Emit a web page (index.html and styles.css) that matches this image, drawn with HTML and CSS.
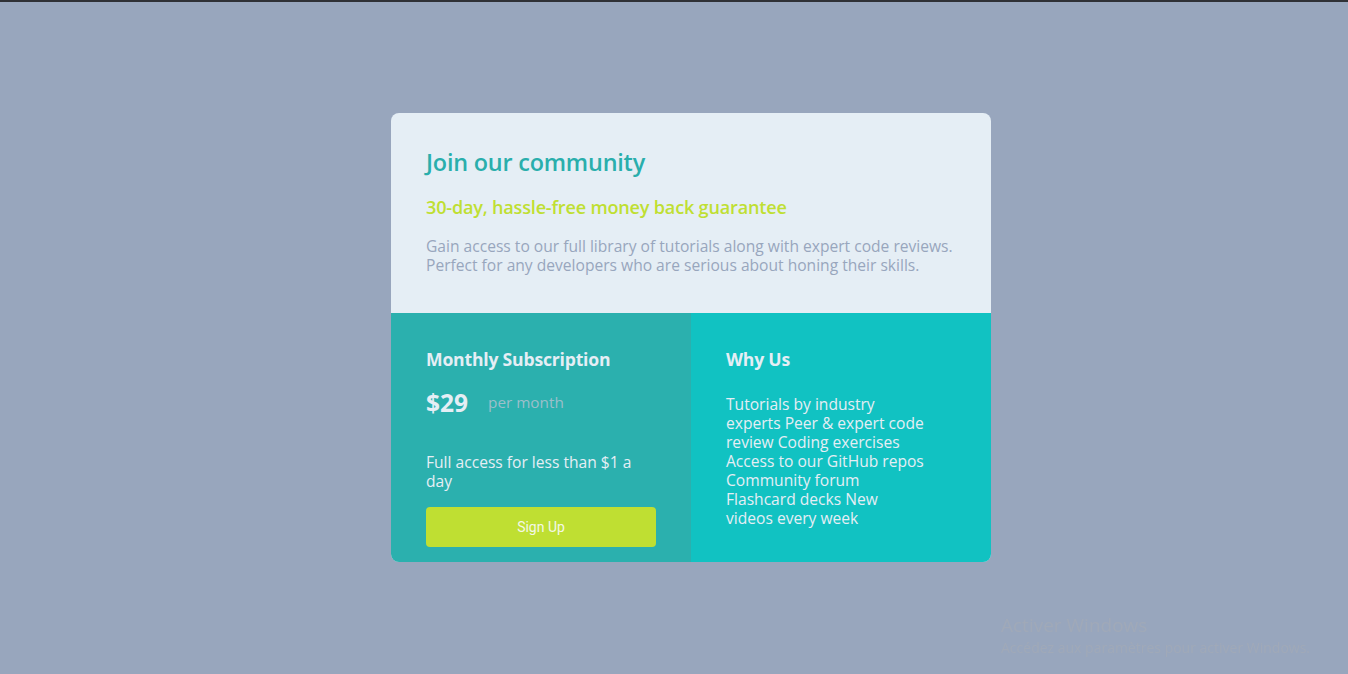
FILE: index.html
```html
<!DOCTYPE html>
<html lang="en">
<head>
<meta charset="utf-8">
<title>Single price grid</title>
<link rel="stylesheet" href="styles.css">
</head>
<body>
<main class="page">
  <section class="card">
    <div class="intro">
      <h1 class="title">Join our community</h1>
      <h2 class="guarantee">30-day, hassle-free money back guarantee</h2>
      <p class="desc">Gain access to our full library of tutorials along with expert code reviews. Perfect for any developers who are serious about honing their skills.</p>
    </div>
    <div class="bottom">
      <div class="sub">
        <h3 class="sub-title">Monthly Subscription</h3>
        <div class="price-row">
          <span class="price">$29</span>
          <span class="per">per month</span>
        </div>
        <p class="sub-text">Full access for less than $1 a day</p>
        <button class="btn">Sign Up</button>
      </div>
      <div class="why">
        <h3 class="why-title">Why Us</h3>
        <p class="why-text">Tutorials by industry experts Peer &amp; expert code review Coding exercises Access to our GitHub repos Community forum Flashcard decks New videos every week</p>
      </div>
    </div>
  </section>
</main>
<div class="watermark">
  <div class="wm-title">Activer Windows</div>
  <div class="wm-sub">Accédez aux paramètres pour activer Windows.</div>
</div>
</body>
</html>
```
FILE: styles.css
```css
* { box-sizing: border-box; }
html, body { margin: 0; height: 100%; }
body {
  background: #98a6bd;
  border-top: 2px solid #2f3136;
  font-family: "Open Sans", "Lato", sans-serif;
}
.page {
  height: 100%;
  display: flex;
  align-items: center;
  justify-content: center;
  padding-left: 34px;
  padding-bottom: 1px;
}
.card {
  width: 600px;
  border-radius: 8px;
  overflow: hidden;
  background: #e5eef5;
}
.intro {
  height: 200px;
  padding: 34px 35px 0;
}
.title {
  margin: 0;
  font-size: 23.4px;
  font-weight: 600;
  color: #2aaeac;
  line-height: 30px;
  letter-spacing: -0.2px;
}
.guarantee {
  margin: 18px 0 0;
  font-size: 18.1px;
  font-weight: 600;
  color: #bfdf32;
  line-height: 24px;
  letter-spacing: -0.2px;
}
.desc {
  margin: 18px 0 0;
  font-size: 15.6px;
  line-height: 19px;
  color: #98a6bd;
}
.bottom {
  display: flex;
  height: 249px;
}
.sub {
  width: 300px;
  background: #2bb0ae;
  padding: 35px 35px 0;
  color: #e5eef5;
}
.why {
  width: 300px;
  background: #11c2c2;
  padding: 35px 35px 0;
  color: #e5eef5;
}
.sub-title, .why-title {
  margin: 0;
  font-size: 17.6px;
  font-weight: 700;
  line-height: 22px;
  letter-spacing: -0.2px;
}
.price-row {
  display: flex;
  align-items: center;
  gap: 20px;
  margin-top: 18px;
  height: 28px;
}
.price {
  font-size: 24.5px;
  font-weight: 700;
}
.per {
  font-size: 15.3px;
  color: #9cbfca;
}
.sub-text {
  margin: 37px 0 0;
  width: 215px;
  font-size: 15.6px;
  line-height: 19px;
}
.btn {
  display: block;
  margin-top: 16px;
  width: 230px;
  height: 40px;
  border: 0;
  border-radius: 4px;
  background: #bfdf32;
  color: #f4f8e6;
  font-family: "Roboto", sans-serif;
  font-size: 14px;
}
.why-text {
  margin: 25px 0 0;
  width: 200px;
  font-size: 15.6px;
  line-height: 19px;
}
.watermark {
  position: fixed;
  left: 1001px;
  top: 612px;
  color: #a0a9b8;
  font-family: "Open Sans", sans-serif;
}
.wm-title { font-size: 19px; line-height: 26px; }
.wm-sub { font-size: 14px; line-height: 20px; }
```
